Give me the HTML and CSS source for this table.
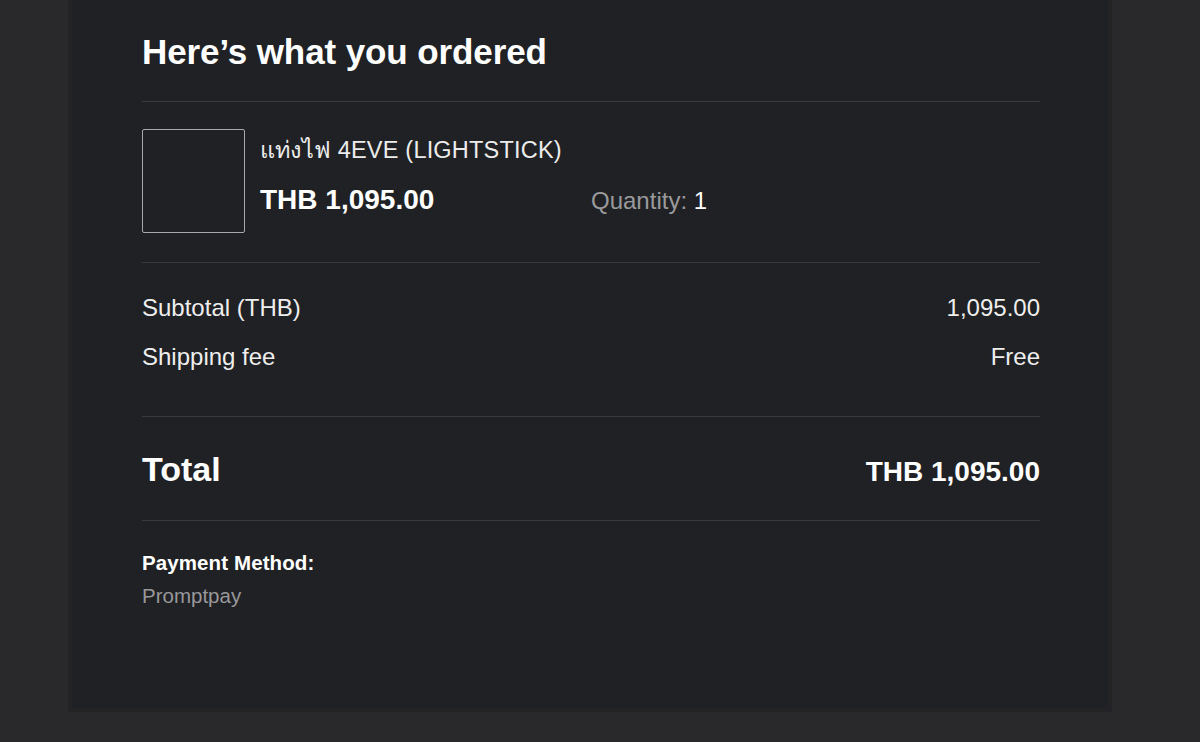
FILE: index.html
```html
<!DOCTYPE html>
<html>
<head>
<meta charset="utf-8">
<link rel="stylesheet" href="styles.css">
</head>
<body>
<main class="card">
  <h1 class="title">Here’s what you ordered</h1>
  <hr class="rule">
  <section class="item">
    <div class="thumb"></div>
    <div class="item-info">
      <div class="item-name">แท่งไฟ 4EVE (LIGHTSTICK)</div>
      <div class="item-row">
        <span class="item-price">THB 1,095.00</span>
        <span class="item-qty"><span class="qty-label">Quantity:</span> 1</span>
      </div>
    </div>
  </section>
  <hr class="rule">
  <section class="sums">
    <div class="sum-row"><span>Subtotal (THB)</span><span>1,095.00</span></div>
    <div class="sum-row"><span>Shipping fee</span><span>Free</span></div>
  </section>
  <hr class="rule">
  <section class="total">
    <span class="total-label">Total</span>
    <span class="total-value">THB 1,095.00</span>
  </section>
  <hr class="rule">
  <section class="payment">
    <div class="pay-label">Payment Method:</div>
    <div class="pay-value">Promptpay</div>
  </section>
</main>
</body>
</html>
```
FILE: styles.css
```css
html, body {
  margin: 0;
  padding: 0;
  background: #29292b;
  height: 742px;
  overflow: hidden;
}
body {
  font-family: "Liberation Sans", Arial, "Noto Sans", sans-serif;
  color: #f2f2f2;
  display: flex;
  align-items: flex-start;
}
.card {
  margin-left: 68px;
  width: 1044px;
  height: 712px;
  box-sizing: border-box;
  padding: 0 68px 0 70px;
  background: #202124;
  border: 4px solid #242427;
  border-top: 0;
  display: flex;
  flex-direction: column;
}
.title {
  margin: 32px 0 0 0;
  font-size: 35px;
  font-weight: bold;
  line-height: 40px;
  color: #ffffff;
  letter-spacing: -0.1px;
}
.rule {
  border: 0;
  height: 1px;
  background: #3a3a3d;
  margin: 0;
  flex: none;
}
.title + .rule { margin-top: 29px; }
.item {
  display: flex;
  padding: 27px 0 29px 0;
}
.thumb {
  width: 103px;
  height: 104px;
  border: 1px solid #a8a8a8;
  box-sizing: border-box;
  border-radius: 2px;
  margin-right: 15px;
  flex: none;
}
.item-info { display: flex; flex-direction: column; }
.item-name {
  font-size: 23.5px;
  line-height: 26px;
  margin-top: 8px;
  color: #ececec;
  letter-spacing: 0.2px;
}
.item-row {
  display: flex;
  align-items: baseline;
  margin-top: 21px;
  line-height: 32px;
}
.item-price {
  font-size: 28px;
  font-weight: bold;
  width: 331px;
  color: #ffffff;
}
.item-qty { font-size: 24px; color: #ffffff; }
.qty-label { color: #9a9a9c; }
.sums {
  display: flex;
  flex-direction: column;
  gap: 25px;
  padding: 33px 0 47px 0;
}
.sum-row {
  display: flex;
  justify-content: space-between;
  font-size: 24px;
  line-height: 24px;
  color: #eeeeee;
}
.total {
  display: flex;
  justify-content: space-between;
  align-items: baseline;
  padding: 33px 0 29px 0;
  line-height: 38px;
}
.total-label { font-size: 34px; font-weight: bold; color: #ffffff; }
.total-value { font-size: 28px; font-weight: bold; color: #ffffff; }
.payment { padding-top: 30px; }
.pay-label { font-size: 20.5px; font-weight: bold; line-height: 24px; color: #ffffff; letter-spacing: 0.1px; }
.pay-value { font-size: 20.5px; line-height: 24px; margin-top: 9px; color: #98989a; }
```
